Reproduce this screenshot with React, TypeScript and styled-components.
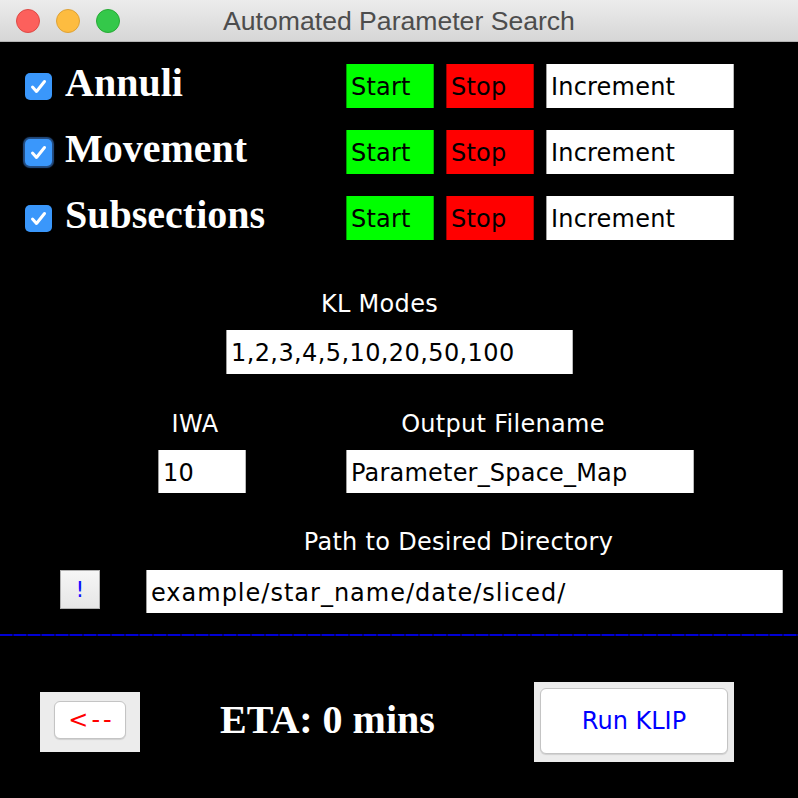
import React from "react";
import styled, { createGlobalStyle } from "styled-components";

const Global = createGlobalStyle`
  html, body { margin: 0; padding: 0; background: #000; }
  body { width: 798px; height: 798px; overflow: hidden; }
`;

const Window = styled.div`
  width: 798px;
  height: 798px;
  display: flex;
  flex-direction: column;
  background: #000;
  font-family: "DejaVu Sans", "Liberation Sans", sans-serif;
`;

const TitleBar = styled.div`
  height: 41px;
  border-bottom: 1px solid #b4b4b4;
  background: linear-gradient(#ececec, #d6d6d6);
  display: grid;
  grid-template-columns: 1fr auto 1fr;
  align-items: center;
`;

const Lights = styled.div`
  display: flex;
  gap: 16px;
  padding-left: 16px;
`;

const Light = styled.span<{ $fill: string; $edge: string }>`
  width: 22px;
  height: 22px;
  border-radius: 50%;
  background: ${(p) => p.$fill};
  border: 1px solid ${(p) => p.$edge};
`;

const Title = styled.div`
  font-family: "Liberation Sans", Arial, sans-serif;
  font-size: 26.6px;
  color: #4d4d4d;
  line-height: 30px;
  margin-top: 1px;
`;

const Content = styled.div`
  display: flex;
  flex-direction: column;
  padding-top: 22px;
`;

const ParamRows = styled.div`
  display: flex;
  flex-direction: column;
  gap: 22px;
`;

const ParamRow = styled.div`
  display: flex;
  align-items: center;
  height: 44px;
  padding-left: 25px;
`;

const Check = styled.span<{ $focus?: boolean }>`
  width: 27px;
  height: 27px;
  border-radius: 5px;
  background: #3a97fb;
  display: flex;
  align-items: center;
  justify-content: center;
  box-shadow: ${(p) => (p.$focus ? "0 0 1px 2px rgba(60,130,220,0.6)" : "none")};
`;

const ParamLabel = styled.span`
  width: 281px;
  margin-left: 13px;
  font-family: "Liberation Serif", "Times New Roman", serif;
  font-weight: bold;
  font-size: 40px;
  line-height: 44px;
  color: #fff;
  padding-bottom: 7px;
  white-space: nowrap;
`;

const Fields = styled.div`
  display: flex;
  gap: 12px;
`;

const Field = styled.div<{ $w: number; $bg?: string; $h?: number; $track?: number }>`
  box-sizing: border-box;
  width: ${(p) => p.$w}px;
  height: ${(p) => p.$h ?? 44}px;
  background: ${(p) => p.$bg ?? "#fff"};
  border-left: 1px solid rgba(0, 0, 0, 0.38);
  border-right: 1px solid rgba(0, 0, 0, 0.28);
  padding-left: 4px;
  padding-top: 3px;
  font-size: 24px;
  letter-spacing: ${(p) => p.$track ?? 0.2}px;
  line-height: ${(p) => (p.$h ?? 44) - 3}px;
  color: #000;
  white-space: nowrap;
  overflow: hidden;
`;

const Group = styled.div<{ $mt: number; $ml: number; $w: number }>`
  display: flex;
  flex-direction: column;
  margin-top: ${(p) => p.$mt}px;
  margin-left: ${(p) => p.$ml}px;
  width: ${(p) => p.$w}px;
  gap: 12px;
`;

const Label = styled.div<{ $shift: number }>`
  font-size: 24px;
  line-height: 28px;
  color: #fff;
  text-align: center;
  white-space: nowrap;
  letter-spacing: 0.3px;
  padding-right: ${(p) => (p.$shift > 0 ? p.$shift * 2 : 0)}px;
  padding-left: ${(p) => (p.$shift < 0 ? -p.$shift * 2 : 0)}px;
`;

const PairRow = styled.div`
  display: flex;
  margin-top: 36px;
  padding-left: 158px;
  gap: 100px;
`;

const PairCol = styled.div<{ $w: number }>`
  display: flex;
  flex-direction: column;
  width: ${(p) => p.$w}px;
  gap: 12px;
`;

const PathSection = styled.div`
  display: flex;
  flex-direction: column;
  margin-top: 35px;
  gap: 14px;
`;

const PathLabelRow = styled.div`
  margin-left: 146px;
  width: 637px;
`;

const PathRow = styled.div`
  display: flex;
  align-items: flex-start;
  padding-left: 60px;
  gap: 46px;
`;

const SmallButton = styled.div`
  box-sizing: border-box;
  width: 40px;
  height: 39px;
  border: 1px solid #b0b0b0;
  background: linear-gradient(#f6f6f6, #e6e6e6);
  color: #1010ff;
  font-size: 22px;
  display: flex;
  align-items: center;
  justify-content: center;
`;

const Divider = styled.div`
  margin-top: 21px;
  height: 2px;
  background: repeating-linear-gradient(
    90deg,
    #0000d4 0px,
    #0000d4 12px,
    #000078 12px,
    #000078 14px
  );
`;

const BottomRow = styled.div`
  display: flex;
  align-items: center;
  margin-top: 46px;
  height: 80px;
  padding-left: 40px;
  padding-right: 64px;
`;

const ButtonWell = styled.div<{ $w: number; $h: number; $pad: string }>`
  box-sizing: border-box;
  width: ${(p) => p.$w}px;
  height: ${(p) => p.$h}px;
  background: #ececec;
  padding: ${(p) => p.$pad};
  display: flex;
`;

const PushButton = styled.div<{ $color: string; $size: number; $track?: number }>`
  flex: 1;
  background: #fff;
  border: 1px solid #c4c4c4;
  border-radius: 6px;
  box-shadow: 0 1px 1px rgba(0, 0, 0, 0.12);
  display: flex;
  align-items: center;
  justify-content: center;
  color: ${(p) => p.$color};
  font-size: ${(p) => p.$size}px;
  letter-spacing: ${(p) => p.$track ?? 0}px;
  padding-left: ${(p) => p.$track ?? 0}px;
`;

const Eta = styled.div`
  margin-left: 80px;
  margin-top: -6px;
  font-family: "Liberation Serif", "Times New Roman", serif;
  font-weight: bold;
  font-size: 40px;
  color: #fff;
  white-space: nowrap;
`;

const Spacer = styled.div`
  flex: 1;
`;

const CheckMark = () => (
  <svg width="19" height="19" viewBox="0 0 19 19">
    <path
      d="M3.5 10 L7.5 14.5 L15.5 4.5"
      fill="none"
      stroke="#fff"
      strokeWidth="3"
      strokeLinecap="round"
      strokeLinejoin="round"
    />
  </svg>
);

const params = [
  { name: "Annuli", focus: false },
  { name: "Movement", focus: true },
  { name: "Subsections", focus: false },
];

export default function App() {
  return (
    <Window>
      <Global />
      <TitleBar>
        <Lights>
          <Light $fill="#fc605c" $edge="#de4a45" />
          <Light $fill="#fdbc40" $edge="#dea236" />
          <Light $fill="#34c84a" $edge="#27aa35" />
        </Lights>
        <Title>Automated Parameter Search</Title>
        <div />
      </TitleBar>
      <Content>
        <ParamRows>
          {params.map((p) => (
            <ParamRow key={p.name}>
              <Check $focus={p.focus}>
                <CheckMark />
              </Check>
              <ParamLabel>{p.name}</ParamLabel>
              <Fields>
                <Field $w={88} $bg="#00ff00">Start</Field>
                <Field $w={88} $bg="#ff0000">Stop</Field>
                <Field $w={188}>Increment</Field>
              </Fields>
            </ParamRow>
          ))}
        </ParamRows>

        <Group $mt={50} $ml={226} $w={347}>
          <Label $shift={20}>KL Modes</Label>
          <Field $w={347} $track={0.4}>1,2,3,4,5,10,20,50,100</Field>
        </Group>

        <PairRow>
          <PairCol $w={88}>
            <Label $shift={7}>IWA</Label>
            <Field $w={88} $h={43}>10</Field>
          </PairCol>
          <PairCol $w={348}>
            <Label $shift={17}>Output Filename</Label>
            <Field $w={348} $h={43}>Parameter_Space_Map</Field>
          </PairCol>
        </PairRow>

        <PathSection>
          <PathLabelRow>
            <Label $shift={6}>Path to Desired Directory</Label>
          </PathLabelRow>
          <PathRow>
            <SmallButton>!</SmallButton>
            <Field $w={637} $h={43} $track={1}>example/star_name/date/sliced/</Field>
          </PathRow>
        </PathSection>

        <Divider />

        <BottomRow>
          <ButtonWell $w={100} $h={60} $pad="9px 14px 13px 14px">
            <PushButton $color="#ff0000" $size={24} $track={3}>&lt;--</PushButton>
          </ButtonWell>
          <Eta>ETA: 0 mins</Eta>
          <Spacer />
          <ButtonWell $w={200} $h={80} $pad="6px 6px 8px 6px">
            <PushButton $color="#0000ff" $size={24}>Run KLIP</PushButton>
          </ButtonWell>
        </BottomRow>
      </Content>
    </Window>
  );
}
